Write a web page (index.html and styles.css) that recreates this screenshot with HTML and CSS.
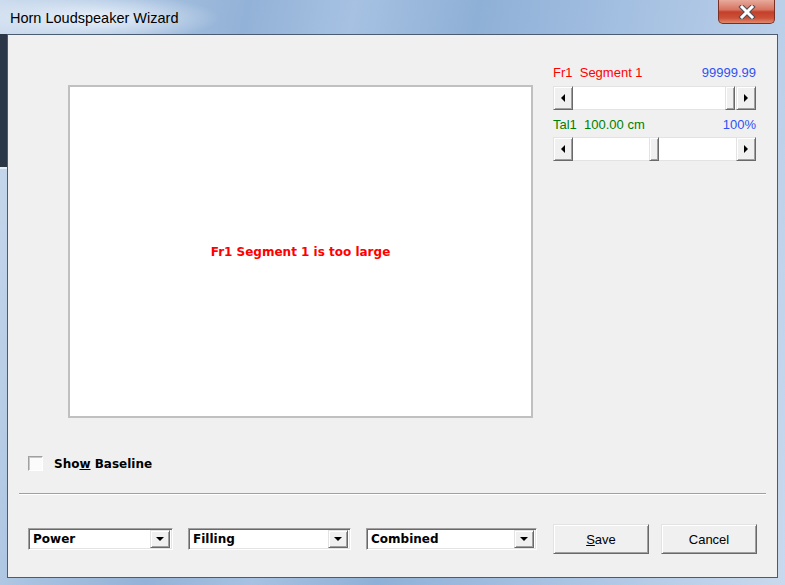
FILE: index.html
```html
<!DOCTYPE html>
<html lang="en">
<head>
  <meta charset="UTF-8">
  <title>Horn Loudspeaker Wizard</title>
  <link rel="stylesheet" href="styles.css">
</head>
<body>
  <div class="window">
    <div class="titlebar">
      <span class="title">Horn Loudspeaker Wizard</span>
      <div class="close">
        <svg width="20" height="14" viewBox="0 0 20 14">
          <path d="M5 2 L15 12 M15 2 L5 12" stroke="#4a4f57" stroke-width="5" stroke-linecap="square"/>
          <path d="M5 2 L15 12 M15 2 L5 12" stroke="#ffffff" stroke-width="3" stroke-linecap="square"/>
        </svg>
      </div>
    </div>

    <div class="client">
      <div class="main">
        <div class="graph">
          <span class="msg">Fr1 Segment 1 is too large</span>
        </div>

        <div class="panel">
          <div class="label-row">
            <span class="red">Fr1  Segment 1</span>
            <span class="blue">99999.99</span>
          </div>
          <div class="scrollbar">
            <div class="arrow"><span class="tri-left"></span></div>
            <div class="track">
              <div class="thumb" style="margin-left: 152px"></div>
            </div>
            <div class="arrow"><span class="tri-right"></span></div>
          </div>

          <div class="label-row second">
            <span class="green">Tal1  100.00 cm</span>
            <span class="blue">100%</span>
          </div>
          <div class="scrollbar">
            <div class="arrow"><span class="tri-left"></span></div>
            <div class="track">
              <div class="thumb" style="margin-left: 76px"></div>
            </div>
            <div class="arrow"><span class="tri-right"></span></div>
          </div>
        </div>
      </div>

      <div class="check-row">
        <span class="checkbox"></span>
        <span class="check-label">Sho<u>w</u> Baseline</span>
      </div>

      <div class="sep"></div>

      <div class="bottom-row">
        <div class="combo combo-power">
          <span class="combo-text">Power</span>
          <span class="drop"><span class="tri-down"></span></span>
        </div>
        <div class="combo combo-filling">
          <span class="combo-text">Filling</span>
          <span class="drop"><span class="tri-down"></span></span>
        </div>
        <div class="combo combo-combined">
          <span class="combo-text">Combined</span>
          <span class="drop"><span class="tri-down"></span></span>
        </div>
        <button class="btn btn-save"><u>S</u>ave</button>
        <button class="btn btn-cancel">Cancel</button>
      </div>
    </div>
  </div>
</body>
</html>
```

FILE: styles.css
```css
body {
  margin: 0;
  font-family: "Liberation Sans", Arial, sans-serif;
  font-size: 13px;
}
.window {
  width: 785px;
  height: 585px;
  box-sizing: border-box;
  padding: 0 7px 7px;
  display: flex;
  flex-direction: column;
  background:
    linear-gradient(to bottom, transparent 34px, #2b3646 34px, #2b3646 167px, #e8eef6 167px, #e8eef6 169px, transparent 169px) left top / 7px 100% no-repeat,
    linear-gradient(100deg, #cddcee 0%, #a9c3e1 14%, #93b2d7 28%, #a6c1e2 40%, #8fb0d6 54%, #a0bde0 68%, #b6cce7 85%, #c9d9ed 100%);
}
.titlebar {
  height: 34px;
  margin: 0 -7px;
  padding: 0 10px;
  display: flex;
  align-items: flex-start;
  background: radial-gradient(ellipse 125px 24px at 95px 18px, rgba(238, 244, 251, 0.95), rgba(238, 244, 251, 0));
}
.title {
  margin-top: 9px;
  font-size: 14.5px;
  line-height: 18px;
  color: #000;
}
.close {
  margin-left: auto;
  width: 57px;
  height: 24px;
  box-sizing: border-box;
  border: 1px solid #7a2e24;
  border-top: none;
  border-radius: 0 0 5px 5px;
  background: linear-gradient(#e7aa9c, #d77460 42%, #c3402b 52%, #cd5038 78%, #df8a6d);
  display: flex;
  align-items: center;
  justify-content: center;
}
.client {
  flex: 1;
  border: 1px solid #4b5b70;
  background: #f0f0f0;
}
.main {
  display: flex;
  align-items: flex-start;
}
.graph {
  margin: 50px 0 0 60px;
  width: 465px;
  height: 333px;
  box-sizing: border-box;
  border: 2px solid #c0c0c0;
  background: #fff;
  display: flex;
  align-items: center;
  justify-content: center;
}
.msg {
  color: #f00;
  font: bold 12px "DejaVu Sans", sans-serif;
}
.panel {
  margin: 30px 0 0 20px;
  width: 203px;
}
.label-row {
  display: flex;
  justify-content: space-between;
  height: 16px;
  line-height: 16px;
  white-space: pre;
}
.label-row.second {
  margin-top: 7px;
}
.red { color: #f00; }
.blue { color: #2f52f0; }
.green { color: #008000; }
.scrollbar {
  display: flex;
  height: 24px;
  margin-top: 5px;
}
.label-row.second + .scrollbar {
  margin-top: 4px;
}
.arrow, .thumb, .drop {
  box-sizing: border-box;
  border: 1px solid;
  border-color: #e3e3e3 #696969 #696969 #e3e3e3;
  box-shadow: inset 1px 1px #fff, inset -1px -1px #a0a0a0;
  background: #f0f0f0;
}
.arrow {
  width: 20px;
  display: flex;
  align-items: center;
  justify-content: center;
}
.track {
  flex: 1;
  display: flex;
  background: #fff;
  border-top: 1px solid #e3e3e3;
  border-bottom: 1px solid #e3e3e3;
}
.thumb {
  width: 10px;
  margin-top: -1px;
  margin-bottom: -1px;
}
.tri-left {
  width: 0;
  height: 0;
  border-top: 4px solid transparent;
  border-bottom: 4px solid transparent;
  border-right: 4px solid #000;
}
.tri-right {
  width: 0;
  height: 0;
  border-top: 4px solid transparent;
  border-bottom: 4px solid transparent;
  border-left: 4px solid #000;
}
.tri-down {
  width: 0;
  height: 0;
  border-left: 4px solid transparent;
  border-right: 4px solid transparent;
  border-top: 4px solid #000;
}
.check-row {
  display: flex;
  align-items: center;
  margin: 38px 0 0 20px;
  height: 15px;
}
.checkbox {
  width: 15px;
  height: 15px;
  box-sizing: border-box;
  border: 1px solid;
  border-color: #a0a0a0 #fff #fff #a0a0a0;
  box-shadow: inset 1px 1px #c8c8c8;
  background: #fbfbfb;
}
.check-label {
  margin-left: 11px;
  font: bold 12px "DejaVu Sans", sans-serif;
}
.sep {
  margin: 22px 11px 0;
  border-top: 1px solid #a0a0a0;
  border-bottom: 1px solid #fff;
}
.bottom-row {
  display: flex;
  align-items: center;
  margin: 29px 0 0 20px;
  height: 30px;
}
.combo {
  height: 22px;
  box-sizing: border-box;
  border: 1px solid;
  border-color: #a0a0a0 #fff #fff #a0a0a0;
  box-shadow: inset 1px 1px #696969, inset -1px -1px #e3e3e3;
  background: #fff;
  display: flex;
  align-items: center;
  padding: 2px;
}
.combo-power { width: 145px; }
.combo-filling { width: 163px; margin-left: 15px; }
.combo-combined { width: 171px; margin-left: 15px; }
.combo-text {
  flex: 1;
  padding-left: 2px;
  font: bold 12px "DejaVu Sans", sans-serif;
}
.drop {
  width: 20px;
  height: 18px;
  display: flex;
  align-items: center;
  justify-content: center;
}
.btn {
  width: 96px;
  height: 30px;
  box-sizing: border-box;
  border: 1px solid;
  border-color: #e3e3e3 #696969 #696969 #e3e3e3;
  box-shadow: inset 1px 1px #fff, inset -1px -1px #a0a0a0;
  background: #f0f0f0;
  font-family: "Liberation Sans", Arial, sans-serif;
  font-size: 13px;
  color: #000;
  padding: 0;
}
.btn-save { margin-left: 16px; }
.btn-cancel { margin-left: 12px; }
```
